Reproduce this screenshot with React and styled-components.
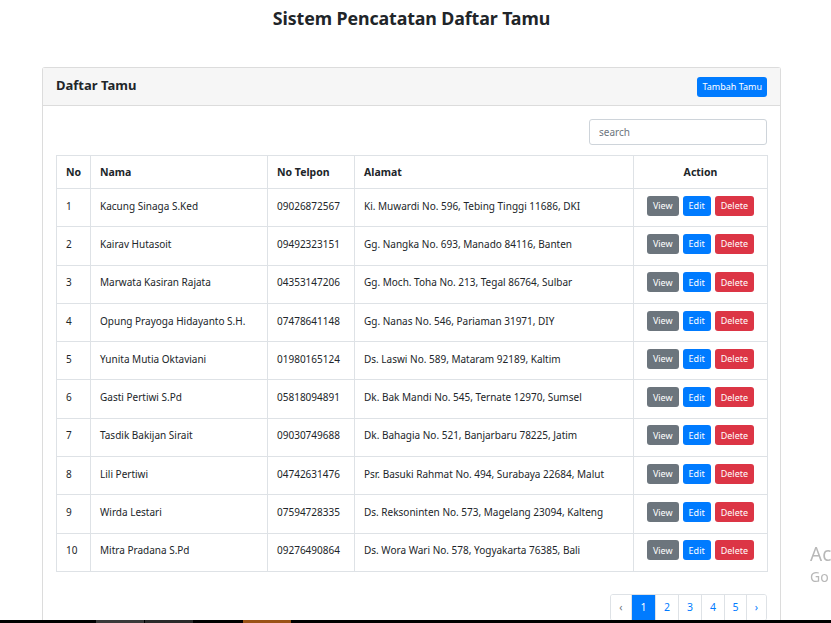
import styled, { createGlobalStyle } from "styled-components";

const GlobalStyle = createGlobalStyle`
  html, body {
    margin: 0;
    padding: 0;
    background: #fff;
    overflow: hidden;
    height: 623px;
  }
  body {
    font-family: "Noto Sans", "Open Sans", sans-serif;
    color: #212529;
  }
`;

const guests = [
  ["Kacung Sinaga S.Ked", "09026872567", "Ki. Muwardi No. 596, Tebing Tinggi 11686, DKI"],
  ["Kairav Hutasoit", "09492323151", "Gg. Nangka No. 693, Manado 84116, Banten"],
  ["Marwata Kasiran Rajata", "04353147206", "Gg. Moch. Toha No. 213, Tegal 86764, Sulbar"],
  ["Opung Prayoga Hidayanto S.H.", "07478641148", "Gg. Nanas No. 546, Pariaman 31971, DIY"],
  ["Yunita Mutia Oktaviani", "01980165124", "Ds. Laswi No. 589, Mataram 92189, Kaltim"],
  ["Gasti Pertiwi S.Pd", "05818094891", "Dk. Bak Mandi No. 545, Ternate 12970, Sumsel"],
  ["Tasdik Bakijan Sirait", "09030749688", "Dk. Bahagia No. 521, Banjarbaru 78225, Jatim"],
  ["Lili Pertiwi", "04742631476", "Psr. Basuki Rahmat No. 494, Surabaya 22684, Malut"],
  ["Wirda Lestari", "07594728335", "Ds. Reksoninten No. 573, Magelang 23094, Kalteng"],
  ["Mitra Pradana S.Pd", "09276490864", "Ds. Wora Wari No. 578, Yogyakarta 76385, Bali"],
];

const Page = styled.div`
  width: 739px;
  margin-left: 42px;
`;

const Title = styled.h1`
  margin: 0;
  padding-top: 6px;
  height: 67px;
  box-sizing: border-box;
  text-align: center;
  font-size: 17.8px;
  font-weight: 700;
  letter-spacing: -0.1px;
`;

const Card = styled.div`
  border: 1px solid #dcdcdc;
  border-bottom: none;
  border-radius: 3px 3px 0 0;
  height: 580px;
`;

const CardHeader = styled.div`
  display: flex;
  align-items: center;
  justify-content: space-between;
  height: 37px;
  padding: 0 13px;
  background: #f6f6f6;
  border-bottom: 1px solid #dcdcdc;
`;

const CardTitle = styled.h2`
  margin: 0 0 3px;
  font-size: 13px;
  font-weight: 700;
`;

const Button = styled.button`
  border: none;
  border-radius: 3px;
  color: #fff;
  font-family: inherit;
  font-size: 9px;
  line-height: 1;
  padding: 0 ${(p) => p.$px || 6}px;
  height: 20px;
  background: ${(p) =>
    p.$variant === "secondary" ? "#6c757d" : p.$variant === "danger" ? "#dc3545" : "#007bff"};
`;

const CardBody = styled.div`
  padding: 13px 13px 0;
`;

const SearchRow = styled.div`
  display: flex;
  justify-content: flex-end;
  margin-bottom: 10px;
`;

const Search = styled.input`
  width: 178px;
  height: 26px;
  box-sizing: border-box;
  border: 1px solid #ced4da;
  border-radius: 3px;
  padding: 0 9px;
  font-family: inherit;
  font-size: 10px;
  &::placeholder {
    color: #6c757d;
  }
`;

const Table = styled.table`
  width: 100%;
  border-collapse: collapse;
  font-size: 10px;
  table-layout: fixed;
`;

const Th = styled.th`
  border: 1px solid #dee2e6;
  height: 32px;
  padding: 0 9px;
  font-weight: 700;
  font-size: 10.5px;
  text-align: ${(p) => (p.$center ? "center" : "left")};
`;

const Td = styled.td`
  border: 1px solid #dee2e6;
  height: 33.3px;
  padding: 0 9px 4px;
  white-space: nowrap;
  text-align: ${(p) => (p.$center ? "center" : "left")};
`;

const Actions = styled.div`
  display: flex;
  justify-content: center;
  gap: 4px;
`;

const Pager = styled.nav`
  display: flex;
  justify-content: flex-end;
  margin-top: 22px;
`;

const PageList = styled.ul`
  display: flex;
  margin: 0;
  padding: 0;
  list-style: none;
  border: 1px solid #dee2e6;
  border-radius: 3px;
  overflow: hidden;
`;

const PageItem = styled.li`
  box-sizing: border-box;
  width: ${(p) => p.$w}px;
  height: 25px;
  display: flex;
  align-items: center;
  justify-content: center;
  font-size: 10.5px;
  color: ${(p) => (p.$active ? "#fff" : p.$muted ? "#6c757d" : "#007bff")};
  background: ${(p) => (p.$active ? "#007bff" : "#fff")};
  border-left: ${(p) => (p.$first ? "none" : "1px solid #dee2e6")};
`;

const Watermark = styled.div`
  position: fixed;
  left: 810px;
  top: 542px;
  color: #b8b8b8;
  white-space: nowrap;
  font-family: "Noto Sans", sans-serif;
`;

const WmTitle = styled.div`
  font-size: 19px;
  line-height: 25px;
`;

const WmSub = styled.div`
  font-size: 14px;
  line-height: 20px;
`;

const Taskbar = styled.div`
  position: fixed;
  left: 0;
  bottom: 0;
  width: 100%;
  height: 3px;
  background: #000;
  display: flex;
`;

const TaskSeg = styled.div`
  width: 48px;
  margin-left: ${(p) => p.$ml}px;
  background: ${(p) => p.$c};
`;

export default function App() {
  const pages = [
    { label: "‹", w: 20, muted: true },
    { label: "1", w: 24, active: true },
    { label: "2", w: 23 },
    { label: "3", w: 23 },
    { label: "4", w: 23 },
    { label: "5", w: 22 },
    { label: "›", w: 20 },
  ];
  return (
    <>
      <GlobalStyle />
      <Page>
        <Title>Sistem Pencatatan Daftar Tamu</Title>
        <Card>
          <CardHeader>
            <CardTitle>Daftar Tamu</CardTitle>
            <Button $px={5}>Tambah Tamu</Button>
          </CardHeader>
          <CardBody>
            <SearchRow>
              <Search placeholder="search" />
            </SearchRow>
            <Table>
              <colgroup>
                <col style={{ width: 34 }} />
                <col style={{ width: 177 }} />
                <col style={{ width: 87 }} />
                <col style={{ width: 279 }} />
                <col style={{ width: 134 }} />
              </colgroup>
              <thead>
                <tr>
                  <Th>No</Th>
                  <Th>Nama</Th>
                  <Th>No Telpon</Th>
                  <Th>Alamat</Th>
                  <Th $center>Action</Th>
                </tr>
              </thead>
              <tbody>
                {guests.map(([name, phone, address], i) => (
                  <tr key={phone}>
                    <Td>{i + 1}</Td>
                    <Td>{name}</Td>
                    <Td>{phone}</Td>
                    <Td>{address}</Td>
                    <Td $center>
                      <Actions>
                        <Button $variant="secondary">View</Button>
                        <Button>Edit</Button>
                        <Button $variant="danger">Delete</Button>
                      </Actions>
                    </Td>
                  </tr>
                ))}
              </tbody>
            </Table>
            <Pager>
              <PageList>
                {pages.map((p, i) => (
                  <PageItem key={p.label} $w={p.w} $active={p.active} $muted={p.muted} $first={i === 0}>
                    {p.label}
                  </PageItem>
                ))}
              </PageList>
            </Pager>
          </CardBody>
        </Card>
      </Page>
      <Watermark>
        <WmTitle>Activate Windows</WmTitle>
        <WmSub>Go to Settings to activate Windows.</WmSub>
      </Watermark>
      <Taskbar>
        <TaskSeg $ml={96} $c="#3a3a3a" />
        <TaskSeg $ml={1} $c="#2a2a2a" />
        <TaskSeg $ml={50} $c="#9a5316" />
      </Taskbar>
    </>
  );
}
